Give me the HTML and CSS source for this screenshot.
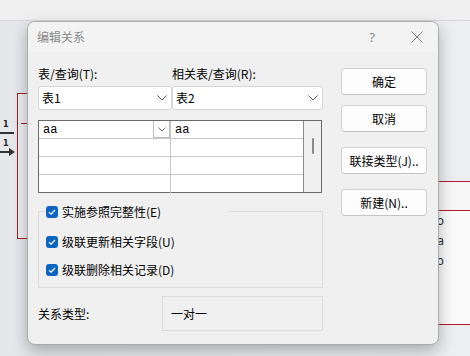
FILE: index.html
```html
<!DOCTYPE html>
<html lang="zh-CN">
<head>
  <meta charset="UTF-8">
  <meta name="viewport" content="width=device-width, initial-scale=1.0">
  <title>编辑关系</title>
  <link rel="stylesheet" href="styles.css">
</head>
<body>
  <div class="desk">
    <div class="topbar"></div>

    <!-- Relationship canvas behind the dialog -->
    <div class="table-box table-left"></div>
    <div class="field-mark"></div>
    <div class="link link-one"><span>1</span></div>
    <div class="link link-two">
      <span>1</span>
      <svg class="arrow-head" width="6" height="8" viewBox="0 0 6 8"><path d="M0 0 L6 4 L0 8 Z" fill="#333"/></svg>
    </div>
    <div class="table-box table-right">
      <div class="table-head"></div>
      <ul class="fields">
        <li>o</li>
        <li>a</li>
        <li>b</li>
      </ul>
    </div>

    <!-- Edit relationship dialog -->
    <div class="dialog">
      <div class="titlebar">
        <span class="title">编辑关系</span>
        <span class="help">?</span>
        <svg class="close" width="12" height="12" viewBox="0 0 12 12">
          <path d="M0.5 0.5 L11.5 11.5 M11.5 0.5 L0.5 11.5" stroke="#7a7a7a" stroke-width="1" fill="none"/>
        </svg>
      </div>

      <div class="dialog-body">
        <div class="main">
          <div class="pick-row">
            <div class="pick pick-left">
              <label>表/查询(T):</label>
              <div class="combo">
                <span>表1</span>
                <svg class="chevron" width="10" height="6" viewBox="0 0 10 6"><path d="M0.5 0.5 L5 5 L9.5 0.5" stroke="#5a5a5a" stroke-width="1" fill="none"/></svg>
              </div>
            </div>
            <div class="pick pick-right">
              <label>相关表/查询(R):</label>
              <div class="combo">
                <span>表2</span>
                <svg class="chevron" width="10" height="6" viewBox="0 0 10 6"><path d="M0.5 0.5 L5 5 L9.5 0.5" stroke="#5a5a5a" stroke-width="1" fill="none"/></svg>
              </div>
            </div>
          </div>

          <div class="grid">
            <div class="cells">
              <div class="cell cell-first">
                <span>aa</span>
                <span class="cell-drop">
                  <svg width="8" height="5" viewBox="0 0 8 5"><path d="M0.5 0.5 L4 4 L7.5 0.5" stroke="#707070" stroke-width="1" fill="none"/></svg>
                </span>
              </div>
              <div class="cell"><span>aa</span></div>
              <div class="cell"></div>
              <div class="cell"></div>
              <div class="cell"></div>
              <div class="cell"></div>
              <div class="cell"></div>
              <div class="cell"></div>
            </div>
            <div class="scroll"><span class="thumb"></span></div>
          </div>

          <div class="options">
            <div class="option option-lead">
              <span class="check"><svg width="12" height="12" viewBox="0 0 12 12"><path d="M3 6.2 L5.1 8.2 L9 4" stroke="#fff" stroke-width="1.2" fill="none"/></svg></span>
              <span>实施参照完整性(E)</span>
            </div>
            <div class="option option-second">
              <span class="check"><svg width="12" height="12" viewBox="0 0 12 12"><path d="M3 6.2 L5.1 8.2 L9 4" stroke="#fff" stroke-width="1.2" fill="none"/></svg></span>
              <span>级联更新相关字段(U)</span>
            </div>
            <div class="option option-third">
              <span class="check"><svg width="12" height="12" viewBox="0 0 12 12"><path d="M3 6.2 L5.1 8.2 L9 4" stroke="#fff" stroke-width="1.2" fill="none"/></svg></span>
              <span>级联删除相关记录(D)</span>
            </div>
          </div>

          <div class="kind-row">
            <span class="kind-label">关系类型:</span>
            <div class="kind-box">一对一</div>
          </div>
        </div>

        <div class="actions">
          <button class="btn">确定</button>
          <button class="btn btn-cancel">取消</button>
          <button class="btn btn-join">联接类型(J)..</button>
          <button class="btn btn-new">新建(N)..</button>
        </div>
      </div>
    </div>
  </div>
</body>
</html>
```

FILE: styles.css
```css
/* Reset */
* {
  margin: 0;
  padding: 0;
  box-sizing: border-box;
}

body {
  width: 470px;
  height: 356px;
  overflow: hidden;
  font-family: "Noto Sans CJK SC", "Noto Sans", sans-serif;
  font-size: 12px;
  line-height: 16px;
  color: #000;
}

/* Desktop / canvas behind */
.desk {
  position: relative;
  width: 470px;
  height: 356px;
  background: linear-gradient(90deg, #e5e7ea, #eceef1);
}

.topbar {
  height: 21px;
  background: #f0f0f0;
  border-bottom: 1px solid #d8d8d8;
}

.table-box {
  position: absolute;
}

.table-left {
  left: 17px;
  top: 93px;
  width: 40px;
  height: 146px;
  border: 1.5px solid #a0202c;
  background: #eceef0;
}

.field-mark {
  position: absolute;
  left: 21px;
  top: 123px;
  width: 20px;
  height: 1px;
  background: #a0202c;
}

.link {
  position: absolute;
  left: 0;
  width: 14px;
  height: 2px;
  background: #333;
}

.link span {
  position: absolute;
  left: 3px;
  top: -12px;
  font-family: "DejaVu Sans", sans-serif;
  font-size: 8px;
  font-weight: bold;
  line-height: 10px;
  color: #222;
}

.link-one {
  top: 132px;
}

.link-two {
  top: 151px;
  width: 10px;
}

.arrow-head {
  position: absolute;
  left: 9px;
  top: -3px;
}

.table-right {
  left: 380px;
  top: 181px;
  width: 100px;
  height: 144px;
  border-top: 1.5px solid #b01c2e;
  border-bottom: 1.5px solid #b01c2e;
  background: #fafafa;
}

.table-head {
  height: 29px;
  border-bottom: 1.5px solid #b01c2e;
  background: #f7f7f7;
}

.fields {
  list-style: none;
  width: 64px;
  text-align: right;
  font-family: "Noto Sans", sans-serif;
  font-size: 12px;
  line-height: 20px;
  color: #2a2a2a;
}

/* Dialog window */
.dialog {
  position: absolute;
  left: 27px;
  top: 21px;
  width: 412px;
  height: 324px;
  background: #f0f0f0;
  border: 1px solid #ababab;
  border-radius: 8px;
  box-shadow: 0 6px 16px rgba(0, 0, 0, 0.28);
  overflow: hidden;
}

.titlebar {
  display: flex;
  align-items: center;
  height: 30px;
  padding-left: 9px;
  background: #f3f3f3;
}

.title {
  flex: 1;
  color: #8a8a8a;
}

.help {
  width: 12px;
  text-align: center;
  font-family: "Noto Sans", sans-serif;
  font-size: 13px;
  color: #8a8a8a;
  margin-right: 33px;
}

.close {
  margin-right: 15px;
}

.dialog-body {
  display: flex;
  padding: 14px 0 0 10px;
}

.main {
  width: 285px;
}

/* Table pickers */
.pick-row {
  display: flex;
}

.pick label {
  display: block;
  height: 16px;
  margin-bottom: 4px;
}

.pick-left {
  width: 134px;
}

.pick-right {
  width: 151px;
}

.combo {
  display: flex;
  align-items: center;
  justify-content: space-between;
  height: 24px;
  padding: 0 4px 0 3px;
  background: #fff;
  border: 1px solid #d6d6d6;
  border-radius: 3px;
}

/* Field grid */
.grid {
  display: flex;
  width: 284px;
  height: 73px;
  margin-top: 10px;
  border: 1px solid #6a6a6a;
  background: #fff;
}

.cells {
  display: grid;
  grid-template-columns: 132px 132px;
  grid-template-rows: repeat(4, 18px);
  width: 264px;
}

.cell {
  display: flex;
  align-items: center;
  justify-content: space-between;
  padding-left: 4px;
  border-bottom: 1px solid #c6c6c6;
  border-right: 1px solid #c6c6c6;
  font-family: "Liberation Mono", monospace;
  font-size: 12px;
}

.cell:nth-child(2n) {
  border-right: none;
}

.cell:nth-last-child(-n+2) {
  border-bottom: none;
}

.cell-drop {
  display: flex;
  align-items: center;
  justify-content: center;
  width: 17px;
  height: 17px;
  border: 1px solid #bdbdbd;
  border-top: none;
}

.scroll {
  flex: 1;
  position: relative;
  background: #f0f0f0;
  border-left: 1px solid #8c8c8c;
}

.thumb {
  position: absolute;
  left: 8px;
  top: 17px;
  width: 2px;
  height: 16px;
  border-radius: 1px;
  background: #8a8a8a;
}

/* Check options group */
.options {
  height: 77px;
  margin-top: 18px;
  padding-left: 6px;
  border: 1px solid #dcdcdc;
}

.option {
  display: flex;
  align-items: center;
  height: 16px;
}

.option-lead {
  width: 183px;
  margin-top: -8px;
  padding-left: 1px;
  background: #f0f0f0;
}

.option-second {
  margin-top: 14px;
  padding-left: 1px;
}

.option-third {
  margin-top: 12px;
  padding-left: 1px;
}

.check {
  display: flex;
  width: 12px;
  height: 12px;
  margin-right: 4px;
  border-radius: 3px;
  background: #0a66c2;
}

/* Relationship type */
.kind-row {
  display: flex;
  align-items: center;
  margin-top: 8px;
}

.kind-label {
  width: 124px;
}

.kind-box {
  display: flex;
  align-items: center;
  width: 161px;
  height: 35px;
  padding-left: 8px;
  border: 1px solid #dcdcdc;
}

/* Buttons */
.actions {
  display: flex;
  flex-direction: column;
  width: 86px;
  margin-left: 18px;
  padding-top: 2px;
}

.btn {
  height: 27px;
  background: #fdfdfd;
  border: 1px solid #d0d0d0;
  border-bottom-color: #c4c4c4;
  border-radius: 4px;
  font-family: "Noto Sans CJK SC", "Noto Sans", sans-serif;
  font-size: 12px;
  color: #000;
}

.btn-cancel {
  margin-top: 10px;
}

.btn-join,
.btn-new {
  margin-top: 15px;
}
```
